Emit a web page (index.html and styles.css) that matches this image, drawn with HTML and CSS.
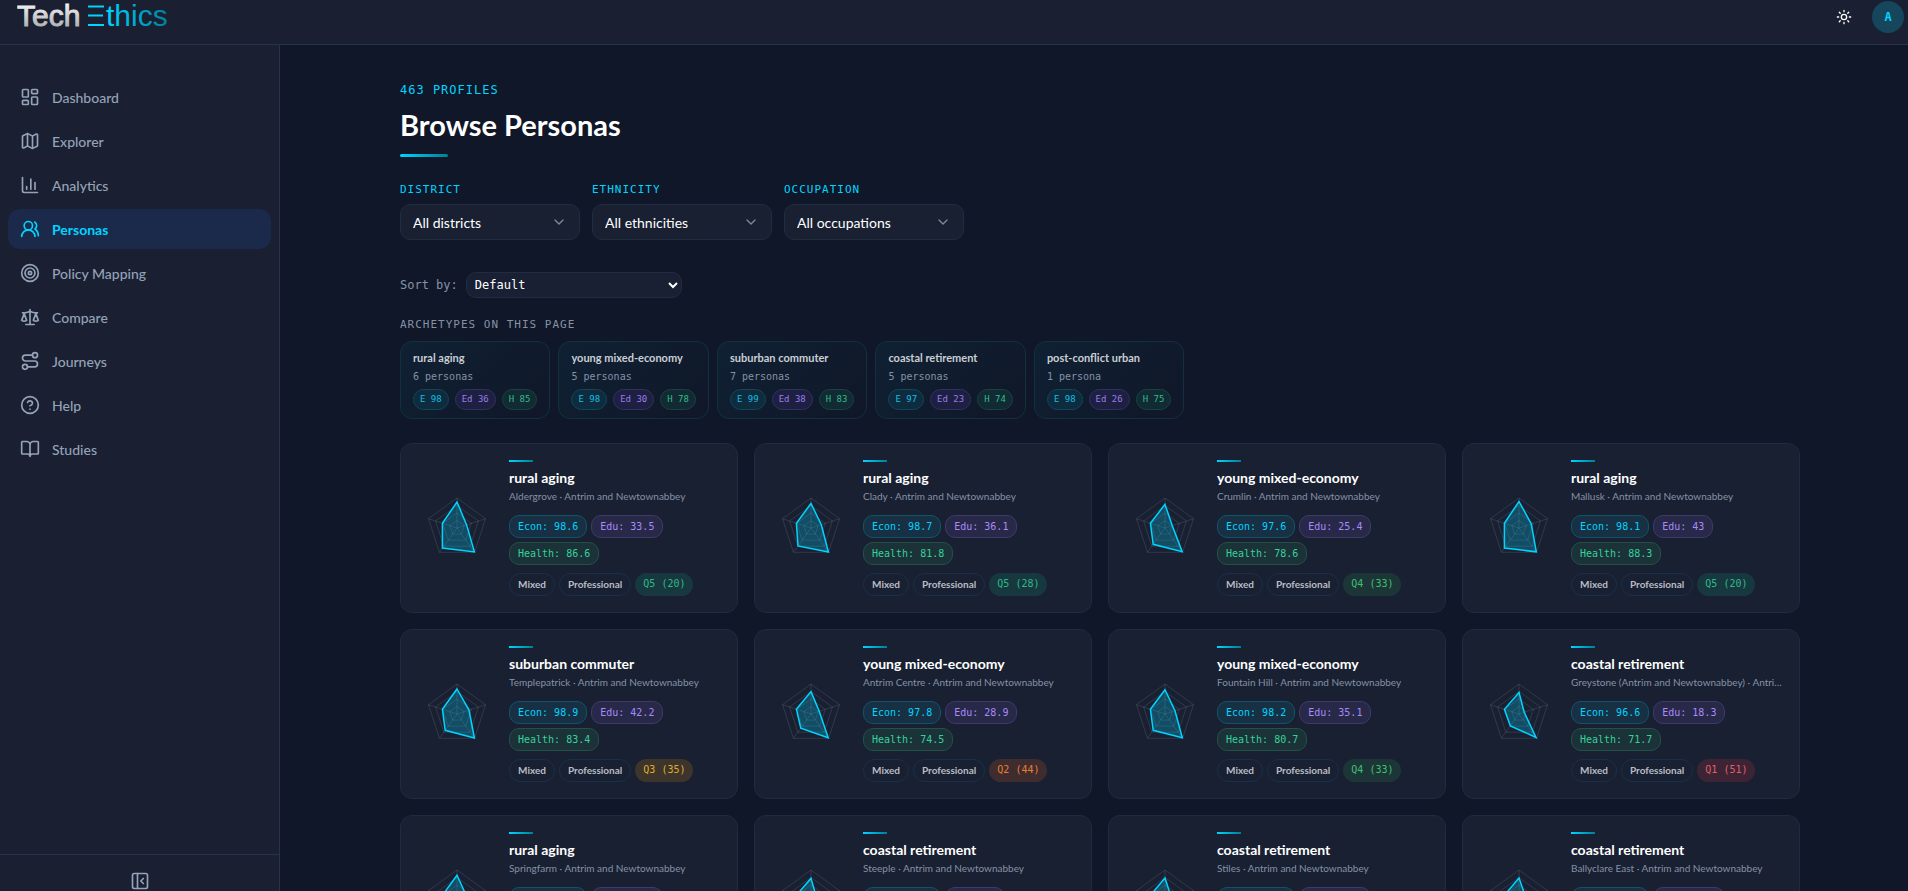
FILE: index.html
```html
<!DOCTYPE html>
<html lang="en">
<head>
  <meta charset="UTF-8" />
  <meta name="viewport" content="width=device-width, initial-scale=1.0" />
  <title>TechEthics - Browse Personas</title>
  <link rel="stylesheet" href="styles.css">
</head>
<body>

<header class="topbar">
  <a class="logo" href="#" aria-label="TechEthics">
    <svg width="156" height="34" viewBox="0 0 156 34">
      <defs>
        <linearGradient id="techFill" x1="0" y1="0" x2="0" y2="1">
          <stop offset="0" stop-color="#ffffff" />
          <stop offset="1" stop-color="#a3a3a3" />
        </linearGradient>
        <linearGradient id="ethicsFill" x1="0" y1="0" x2="1" y2="0">
          <stop offset="0" stop-color="#00d4ff" />
          <stop offset="1" stop-color="#007f99" />
        </linearGradient>
      </defs>
      <text class="logo-tech" x="0" y="26" fill="url(#techFill)" stroke="url(#techFill)">Tech</text>
      <path d="M71 6.5h16M71 15.5h15M71 25h16" stroke="#00d4ff" stroke-width="2" />
      <text class="logo-thics" x="89" y="26" fill="url(#ethicsFill)">thics</text>
    </svg>
  </a>
  <div class="topbar-actions">
    <button class="theme-btn" aria-label="Toggle theme">
      <svg class="icon" width="16" height="16" viewBox="0 0 24 24"><circle cx="12" cy="12" r="4" /><path d="M12 2v2M12 20v2M4.93 4.93l1.41 1.41M17.66 17.66l1.41 1.41M2 12h2M20 12h2M6.34 17.66l-1.41 1.41M19.07 4.93l-1.41 1.41" /></svg>
    </button>
    <button class="avatar">A</button>
  </div>
</header>

<div class="shell">
  <aside class="sidebar">
    <nav class="nav">
      <a class="nav-item" href="#">
        <svg class="icon" width="20" height="20" viewBox="0 0 24 24"><rect x="3" y="3" width="7" height="9" rx="1" /><rect x="14" y="3" width="7" height="5" rx="1" /><rect x="14" y="12" width="7" height="9" rx="1" /><rect x="3" y="16" width="7" height="5" rx="1" /></svg>
        Dashboard
      </a>
      <a class="nav-item" href="#">
        <svg class="icon" width="20" height="20" viewBox="0 0 24 24"><path d="M14.106 5.553a2 2 0 0 0 1.788 0l3.659-1.83A1 1 0 0 1 21 4.619v12.764a1 1 0 0 1-.553.894l-4.553 2.277a2 2 0 0 1-1.788 0l-4.212-2.106a2 2 0 0 0-1.788 0l-3.659 1.83A1 1 0 0 1 3 19.381V6.618a1 1 0 0 1 .553-.894l4.553-2.277a2 2 0 0 1 1.788 0z" /><path d="M15 5.764v15M9 3.236v15" /></svg>
        Explorer
      </a>
      <a class="nav-item" href="#">
        <svg class="icon" width="20" height="20" viewBox="0 0 24 24"><path d="M3 3v16a2 2 0 0 0 2 2h16M18 17V9M13 17V5M8 17v-3" /></svg>
        Analytics
      </a>
      <a class="nav-item active" href="#">
        <svg class="icon" width="20" height="20" viewBox="0 0 24 24"><path d="M18 21a8 8 0 0 0-16 0" /><circle cx="10" cy="8" r="5" /><path d="M22 20c0-3.37-2-6.5-4-8a5 5 0 0 0-.45-8.3" /></svg>
        Personas
      </a>
      <a class="nav-item" href="#">
        <svg class="icon" width="20" height="20" viewBox="0 0 24 24"><circle cx="12" cy="12" r="10" /><circle cx="12" cy="12" r="6" /><circle cx="12" cy="12" r="2" /></svg>
        Policy Mapping
      </a>
      <a class="nav-item" href="#">
        <svg class="icon" width="20" height="20" viewBox="0 0 24 24"><path d="m16 16 3-8 3 8c-.87.65-1.92 1-3 1s-2.13-.35-3-1ZM2 16l3-8 3 8c-.87.65-1.92 1-3 1s-2.13-.35-3-1ZM7 21h10M12 3v18M3 7h2c2 0 5-1 7-2 2 1 5 2 7 2h2" /></svg>
        Compare
      </a>
      <a class="nav-item" href="#">
        <svg class="icon" width="20" height="20" viewBox="0 0 24 24"><circle cx="6" cy="19" r="3" /><path d="M9 19h8.5a3.5 3.5 0 0 0 0-7h-11a3.5 3.5 0 0 1 0-7H15" /><circle cx="18" cy="5" r="3" /></svg>
        Journeys
      </a>
      <a class="nav-item" href="#">
        <svg class="icon" width="20" height="20" viewBox="0 0 24 24"><circle cx="12" cy="12" r="10" /><path d="M9.09 9a3 3 0 0 1 5.83 1c0 2-3 3-3 3M12 17h.01" /></svg>
        Help
      </a>
      <a class="nav-item" href="#">
        <svg class="icon" width="20" height="20" viewBox="0 0 24 24"><path d="M12 7v14M3 18a1 1 0 0 1-1-1V4a1 1 0 0 1 1-1h5a4 4 0 0 1 4 4 4 4 0 0 1 4-4h5a1 1 0 0 1 1 1v13a1 1 0 0 1-1 1h-6a3 3 0 0 0-3 3 3 3 0 0 0-3-3z" /></svg>
        Studies
      </a>
    </nav>
    <div class="sidebar-footer">
      <button class="collapse-btn" aria-label="Collapse sidebar">
        <svg class="icon" width="20" height="20" viewBox="0 0 24 24"><rect x="3" y="3" width="18" height="18" rx="2" /><path d="M9 3v18M16 15l-3-3 3-3" /></svg>
      </button>
    </div>
  </aside>

  <main class="main">
    <div class="content">
      <p class="eyebrow">463 PROFILES</p>
      <h1 class="page-title">Browse Personas</h1>
      <div class="title-bar"></div>

      <div class="filters">
        <div class="filter">
          <label for="district">DISTRICT</label>
          <div class="filter-box">
            <select id="district"><option>All districts</option></select>
            <svg class="icon chevron" width="16" height="16" viewBox="0 0 24 24"><path d="m6 9 6 6 6-6" /></svg>
          </div>
        </div>
        <div class="filter">
          <label for="ethnicity">ETHNICITY</label>
          <div class="filter-box">
            <select id="ethnicity"><option>All ethnicities</option></select>
            <svg class="icon chevron" width="16" height="16" viewBox="0 0 24 24"><path d="m6 9 6 6 6-6" /></svg>
          </div>
        </div>
        <div class="filter">
          <label for="occupation">OCCUPATION</label>
          <div class="filter-box">
            <select id="occupation"><option>All occupations</option></select>
            <svg class="icon chevron" width="16" height="16" viewBox="0 0 24 24"><path d="m6 9 6 6 6-6" /></svg>
          </div>
        </div>
      </div>

      <div class="sort">
        <label for="sort">Sort by:</label>
        <select id="sort"><option>Default</option></select>
      </div>

      <h2 class="section-label">ARCHETYPES ON THIS PAGE</h2>
      <div class="archetypes" id="archetypes"></div>

      <div class="persona-grid" id="personas"></div>
    </div>
  </main>
</div>

<script>
  const archetypes = [
    ['rural aging', '6 personas', 98, 36, 85],
    ['young mixed-economy', '5 personas', 98, 30, 78],
    ['suburban commuter', '7 personas', 99, 38, 83],
    ['coastal retirement', '5 personas', 97, 23, 74],
    ['post-conflict urban', '1 persona', 98, 26, 75]
  ];

  // name, place, econ, edu, health, quintile, rank, housing score
  const personas = [
    ['rural aging', 'Aldergrove', 98.6, 33.5, 86.6, 5, 20, 83],
    ['rural aging', 'Clady', 98.7, 36.1, 81.8, 5, 28, 74],
    ['young mixed-economy', 'Crumlin', 97.6, 25.4, 78.6, 4, 33, 67],
    ['rural aging', 'Mallusk', 98.1, 43, 88.3, 5, 20, 83],
    ['suburban commuter', 'Templepatrick', 98.9, 42.2, 83.4, 3, 35, 67],
    ['young mixed-economy', 'Antrim Centre', 97.8, 28.9, 74.5, 2, 44, 58],
    ['young mixed-economy', 'Fountain Hill', 98.2, 35.1, 80.7, 4, 33, 67],
    ['coastal retirement', 'Greystone (Antrim and Newtownabbey)', 96.6, 18.3, 71.7, 1, 51, 49],
    ['rural aging', 'Springfarm', 98.3, 34.2, 82.4, 4, 30, 70],
    ['coastal retirement', 'Steeple', 96.8, 20, 71.9, 1, 50, 50],
    ['coastal retirement', 'Stiles', 97.1, 22.6, 73.2, 2, 45, 57],
    ['coastal retirement', 'Ballyclare East', 97.4, 24.1, 73.8, 2, 42, 60]
  ];

  const district = 'Antrim and Newtownabbey';

  // five axes, clockwise from the top
  function pentagon(values, radius) {
    return values.map((v, i) => {
      const a = (-90 + i * 72) * Math.PI / 180;
      const r = radius * v / 100;
      return (40 + r * Math.cos(a)).toFixed(1) + ',' + (40 + r * Math.sin(a)).toFixed(1);
    });
  }

  function radar(values) {
    const rings = [25, 50, 75, 100].map(p => `<polygon points="${pentagon([p, p, p, p, p], 30).join(' ')}" />`).join('');
    const spokes = pentagon([100, 100, 100, 100, 100], 30).map(p => `<path d="M40,40L${p}" />`).join('');
    return `<svg class="radar" width="80" height="80" viewBox="0 0 80 80">
      <g class="radar-grid">${rings}${spokes}</g>
      <polygon class="radar-shape" points="${pentagon(values, 30).join(' ')}" />
    </svg>`;
  }

  document.getElementById('archetypes').innerHTML = archetypes.map(([name, count, e, ed, h]) => `
    <article class="archetype">
      <h3>${name}</h3>
      <p>${count}</p>
      <div class="mini-chips">
        <span class="mini econ">E ${e}</span>
        <span class="mini edu">Ed ${ed}</span>
        <span class="mini health">H ${h}</span>
      </div>
    </article>`).join('');

  document.getElementById('personas').innerHTML = personas.map(([name, place, e, ed, h, q, rank, housing]) => `
    <article class="persona">
      ${radar([h, ed, e, housing, 51])}
      <div class="persona-body">
        <div class="accent"></div>
        <h3>${name}</h3>
        <p class="place">${place} · ${district}</p>
        <div class="chips">
          <span class="chip econ">Econ: ${e}</span>
          <span class="chip edu">Edu: ${ed}</span>
          <span class="chip health">Health: ${h}</span>
        </div>
        <div class="tags">
          <span class="tag">Mixed</span>
          <span class="tag">Professional</span>
          <span class="quintile q${q}">Q${q} (${rank})</span>
        </div>
      </div>
    </article>`).join('');
</script>

</body>
</html>
```
FILE: styles.css
```css
* {
  box-sizing: border-box;
}

body {
  margin: 0;
  height: 100vh;
  overflow: hidden;
  display: flex;
  flex-direction: column;
  background: #101728;
  color: #fff;
  font-family: Lato, sans-serif;
}

h1, h2, h3, p {
  margin: 0;
}

button {
  border: none;
  padding: 0;
  cursor: pointer;
}

.icon {
  flex: none;
  fill: none;
  stroke: currentColor;
  stroke-width: 2;
  stroke-linecap: round;
  stroke-linejoin: round;
}

/* top bar */
.topbar {
  display: flex;
  justify-content: space-between;
  align-items: center;
  padding: 0 4px 10px 17px;
  background: #1a1f32;
  border-bottom: 1px solid #26344a;
}

.logo svg {
  display: block;
}

.logo-tech, .logo-thics {
  font: 30px "Liberation Sans", sans-serif;
}

.logo-tech {
  stroke-width: 1;
}

.topbar-actions {
  display: flex;
  align-items: center;
  gap: 20px;
}

.theme-btn {
  display: flex;
  background: none;
  color: #fff;
}

.avatar {
  width: 32px;
  height: 32px;
  border-radius: 50%;
  background: #15465c;
  color: #00d4ff;
  font: bold 12px "DejaVu Sans Mono", monospace;
}

/* sidebar */
.shell {
  flex: 1;
  display: flex;
  min-height: 0;
}

.sidebar {
  flex: none;
  display: flex;
  flex-direction: column;
  width: 280px;
  background: #1a1f32;
  border-right: 1px solid #26344a;
}

.nav {
  flex: 1;
  display: flex;
  flex-direction: column;
  gap: 4px;
  padding: 32px 8px 0;
}

.nav-item {
  display: flex;
  align-items: center;
  gap: 12px;
  height: 40px;
  padding: 0 12px;
  border-radius: 12px;
  color: #94a3b8;
  font-size: 14px;
  font-weight: 500;
  text-decoration: none;
}

.nav-item.active {
  background: #1b294b;
  color: #00d4ff;
  font-weight: bold;
}

.sidebar-footer {
  display: flex;
  justify-content: center;
  padding-top: 16px;
  border-top: 1px solid #26344a;
}

.collapse-btn {
  display: flex;
  background: none;
  color: #94a3b8;
}

/* main column */
.main {
  flex: 1;
  min-width: 0;
  overflow: hidden;
  padding: 36px 0 0 12px;
}

.content {
  max-width: 1400px;
  margin: 0 auto;
}

.eyebrow {
  color: #00d4ff;
  font: 12px/18px "DejaVu Sans Mono", monospace;
  letter-spacing: 1px;
}

.page-title {
  margin-top: 8px;
  font-size: 29px;
  line-height: 36px;
}

.title-bar {
  width: 48px;
  height: 3px;
  margin-top: 11px;
  border-radius: 2px;
  background: linear-gradient(90deg, #00d4ff, #007f99);
}

.filters {
  display: flex;
  gap: 12px;
  margin-top: 25px;
}

.filter {
  display: flex;
  flex-direction: column;
  gap: 6px;
  width: 180px;
}

.filter label {
  color: #00d4ff;
  font: 11px/16px "DejaVu Sans Mono", monospace;
  letter-spacing: 1px;
}

.filter-box {
  display: grid;
  align-items: center;
}

.filter-box select, .chevron {
  grid-area: 1 / 1;
}

.filter-box select {
  appearance: none;
  height: 36px;
  padding: 0 36px 0 12px;
  background: #182032;
  border: 1px solid #222c40;
  border-radius: 10px;
  color: #fff;
  font: 14px Lato, sans-serif;
}

.chevron {
  justify-self: end;
  margin-right: 13px;
  color: #7f8694;
  pointer-events: none;
}

.sort {
  display: flex;
  align-items: center;
  gap: 8px;
  margin-top: 32px;
  color: #8592a6;
  font: 12px "DejaVu Sans Mono", monospace;
}

.sort select {
  width: 216px;
  height: 26px;
  padding: 0 4px;
  background-color: #1a2033;
  border: 1px solid #222c40;
  border-radius: 10px;
  color: #fff;
  font: inherit;
}

.section-label {
  margin-top: 19px;
  color: #8592a6;
  font: 11px/16px "DejaVu Sans Mono", monospace;
  letter-spacing: 1px;
}

/* archetype summary */
.archetypes {
  display: flex;
  flex-wrap: wrap;
  gap: 8px;
  margin-top: 8px;
}

.archetype {
  min-width: 150px;
  padding: 8px 12px;
  background: linear-gradient(135deg, #0f2133, #101728);
  border: 1px solid #12303f;
  border-radius: 12px;
}

.archetype h3 {
  color: #cbced4;
  font-size: 11px;
  line-height: 15px;
}

.archetype p {
  margin-top: 5px;
  color: #8592a6;
  font: 10px/14px "DejaVu Sans Mono", monospace;
}

.mini-chips {
  display: flex;
  gap: 6px;
  margin-top: 5px;
}

.mini {
  padding: 3px 6px;
  border: 1px solid;
  border-radius: 11px;
  font: 9px/13px "DejaVu Sans Mono", monospace;
}

.mini.econ {
  background: #0f2b3e;
  border-color: #10475b;
  color: #11bfe3;
}

.mini.edu {
  background: #1e2042;
  border-color: #342f60;
  color: #9a7cea;
}

.mini.health {
  background: #122a33;
  border-color: #17443f;
  color: #2fbd86;
}

/* persona cards */
.persona-grid {
  display: grid;
  grid-template-columns: repeat(4, minmax(0, 1fr));
  gap: 16px;
  margin-top: 24px;
}

.persona {
  display: flex;
  align-items: center;
  gap: 12px;
  padding: 16px;
  background: #182032;
  border: 1px solid #1f2b3f;
  border-radius: 12px;
}

.radar {
  flex: none;
}

.radar-grid {
  fill: none;
  stroke: rgba(255, 255, 255, 0.11);
}

.radar-shape {
  fill: rgba(0, 212, 255, 0.25);
  stroke: #00d4ff;
  stroke-width: 1.5;
}

.persona-body {
  flex: 1;
  min-width: 0;
}

.accent {
  width: 24px;
  height: 2px;
  margin-bottom: 6px;
  background: linear-gradient(90deg, #00d4ff, #007f99);
}

.persona h3 {
  font-size: 14px;
  line-height: 20px;
}

.place {
  overflow: hidden;
  color: #8592a6;
  font-size: 10px;
  line-height: 17px;
  text-overflow: ellipsis;
  white-space: nowrap;
}

.chips, .tags {
  display: flex;
  flex-wrap: wrap;
  gap: 4px;
}

.chips {
  margin-top: 10px;
}

.tags {
  margin-top: 8px;
}

.chip {
  padding: 3px 8px;
  border: 1px solid;
  border-radius: 10px;
  font: 10px/15px "DejaVu Sans Mono", monospace;
}

.chip.econ {
  background: #173044;
  border-color: #115468;
  color: #00d4ff;
}

.chip.edu {
  background: #282848;
  border-color: #403a68;
  color: #a78bfa;
}

.chip.health {
  background: #1c3239;
  border-color: #225148;
  color: #34d399;
}

.tag {
  padding: 3px 8px;
  border: 1px solid #17314a;
  border-radius: 12px;
  color: #b9bdc5;
  font-size: 10px;
  font-weight: bold;
  line-height: 15px;
}

.quintile {
  padding: 3px 8px 5px;
  border-radius: 12px;
  font: 10px/15px "DejaVu Sans Mono", monospace;
}

.q1 {
  background: #3c2435;
  color: #e06068;
}

.q2 {
  background: #3e2c2e;
  color: #e87f35;
}

.q3 {
  background: #3d342c;
  color: #e0ae26;
}

.q4 {
  background: #1c3638;
  color: #40c070;
}

.q5 {
  background: #17383e;
  color: #30ba8b;
}
```
